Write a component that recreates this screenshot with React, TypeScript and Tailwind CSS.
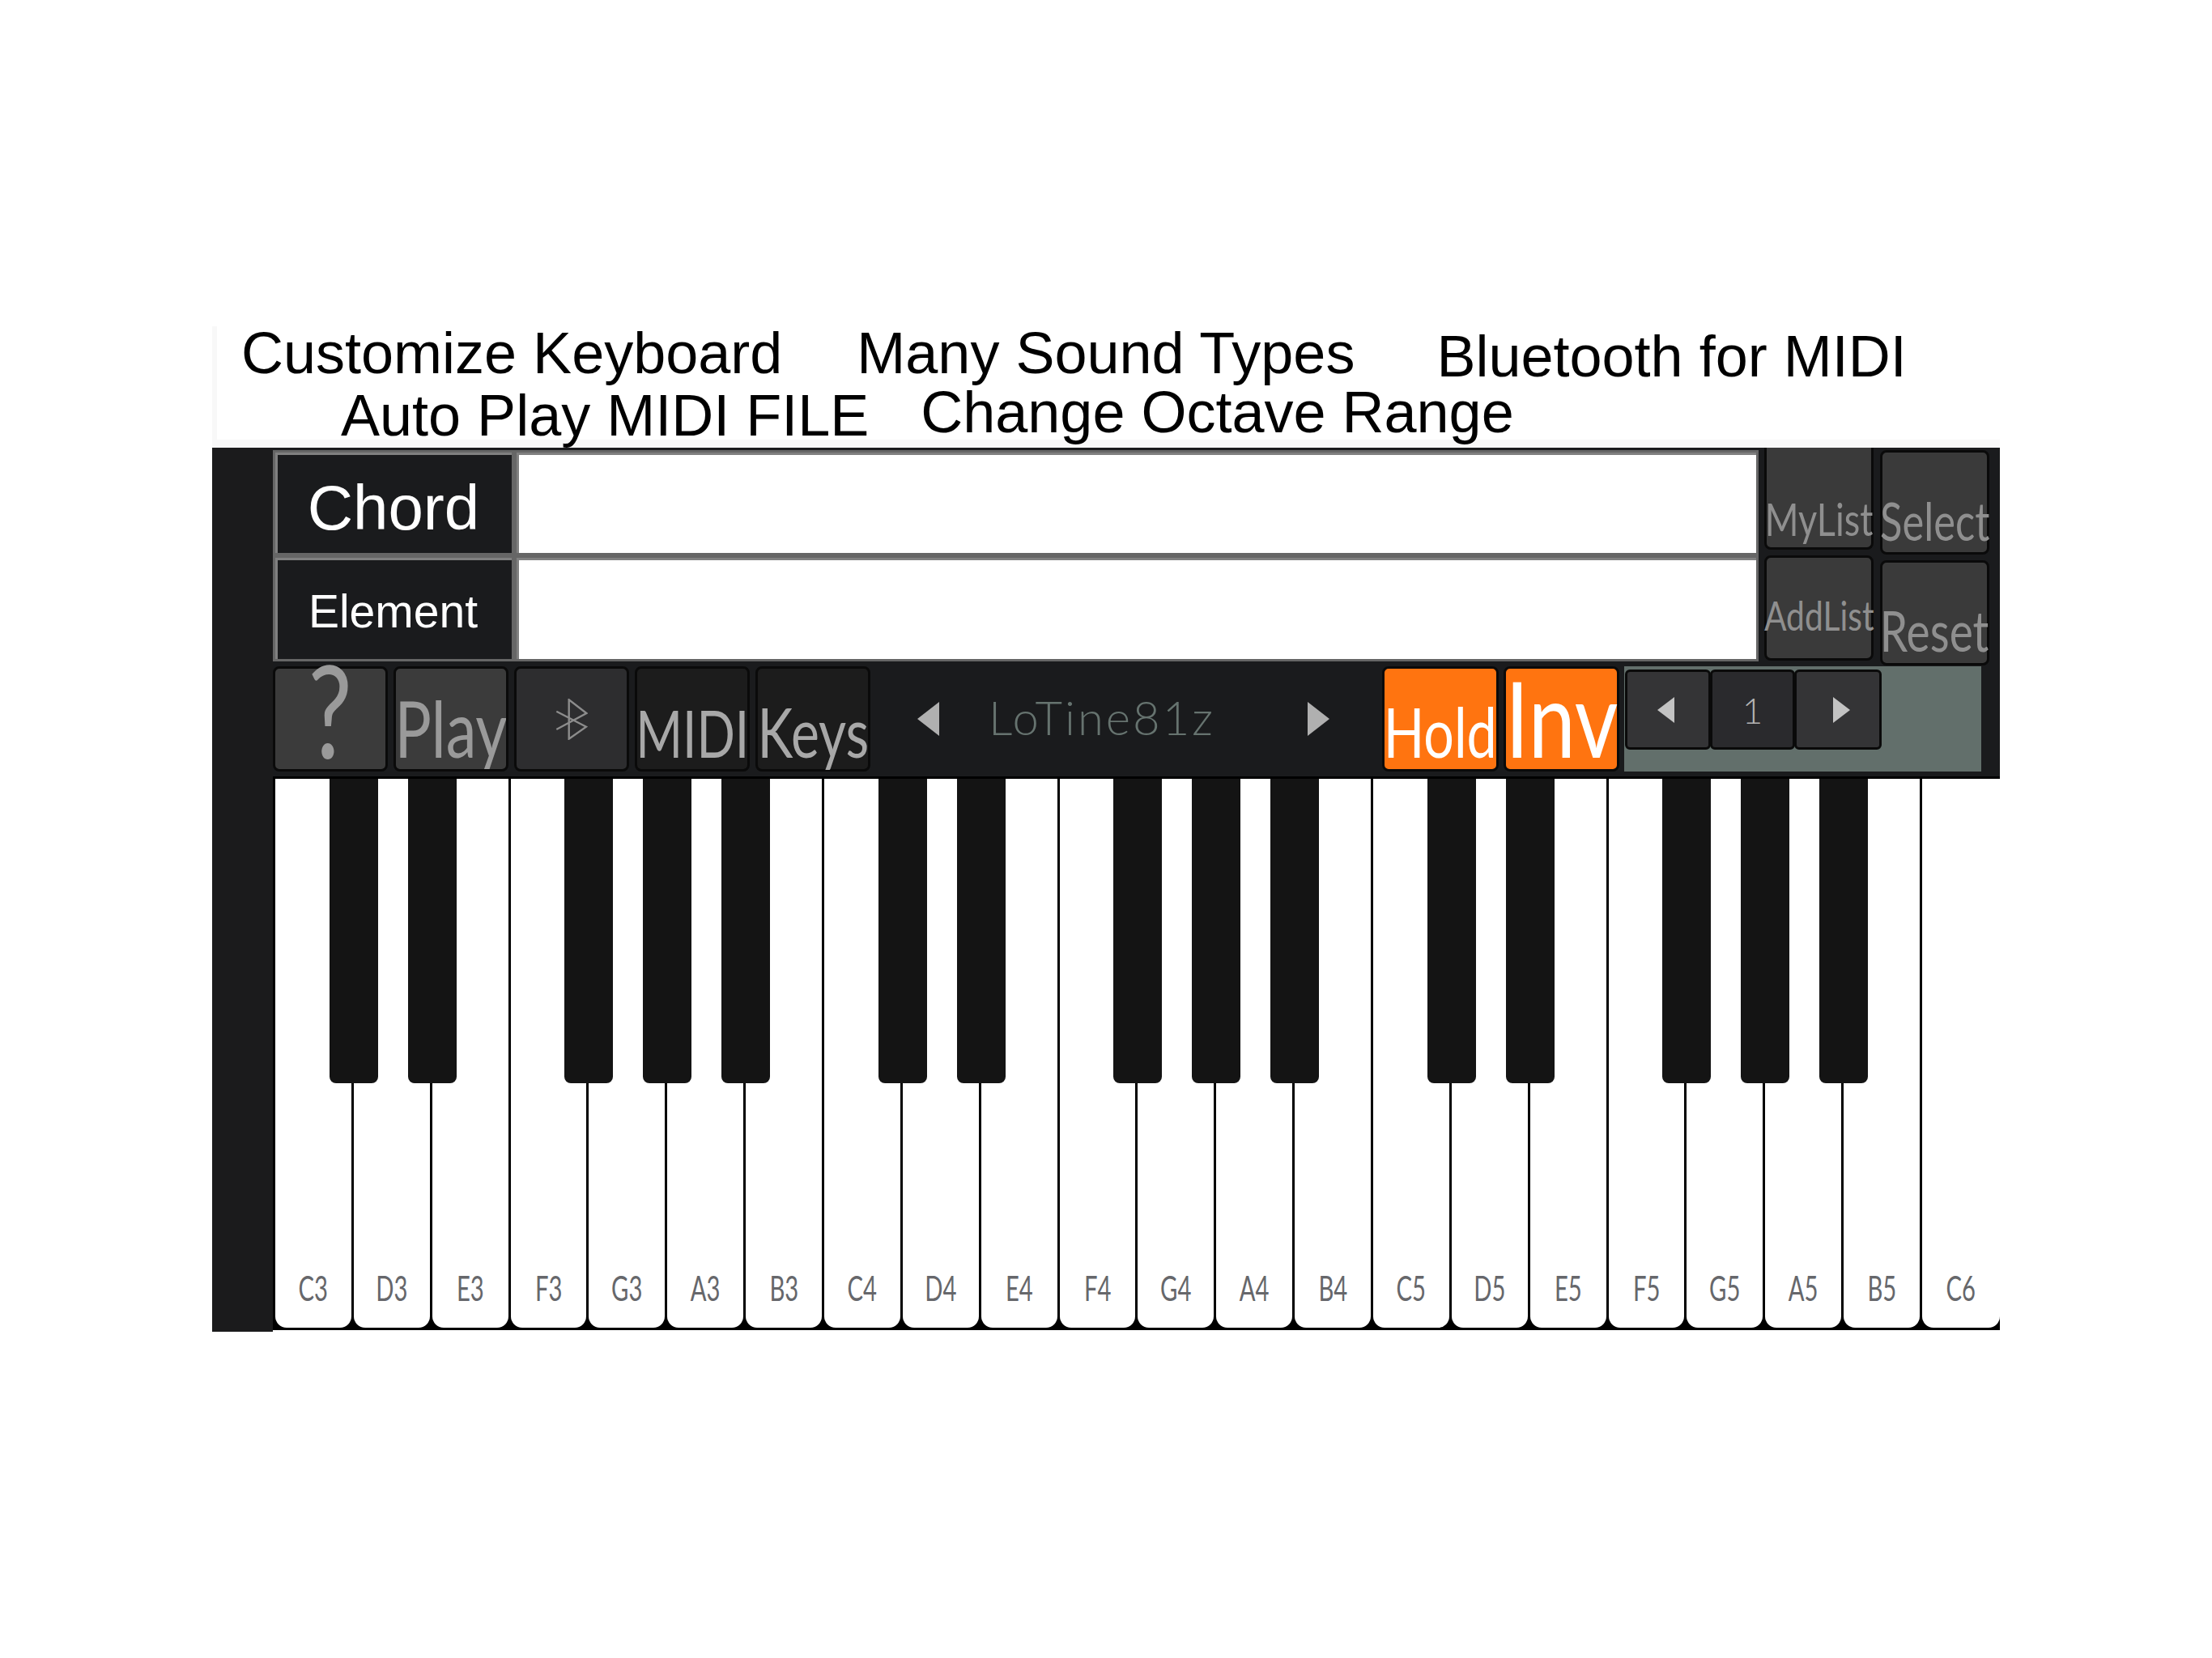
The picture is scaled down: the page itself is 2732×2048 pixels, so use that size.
import React from "react";

const whiteKeys = ["C3","D3","E3","F3","G3","A3","B3","C4","D4","E4","F4","G4","A4","B4","C5","D5","E5","F5","G5","A5","B5","C6"];
const hasBlack = (n: string) => !n.startsWith("E") && !n.startsWith("B") && n !== "C6";

function Btn({ box, label, text }: { box: string; label?: string; text?: string }) {
  return (
    <div className={"border-[3px] border-[#0a0a0a] rounded-[8px] flex items-end justify-center shrink-0 " + box}>
      {text ? <span className={"font-['Lato',sans-serif] whitespace-nowrap shrink-0 " + label}>{text}</span> : null}
    </div>
  );
}

function Tri({ dir, w, h, color }: { dir: "l" | "r"; w: number; h: number; color: string }) {
  return (
    <svg width={w} height={h} viewBox={`0 0 ${w} ${h}`} className="shrink-0 block">
      <polygon points={dir === "l" ? `0,${h / 2} ${w},0 ${w},${h}` : `0,0 ${w},${h / 2} 0,${h}`} fill={color} />
    </svg>
  );
}

export default function App() {
  return (
    <div className="w-[2732px] h-[2048px] bg-white pt-[403px] pl-[262px] overflow-hidden">
      <div className="w-[2208px]">
        <div className="bg-[#f8f8f8] pl-[6px] pb-[10px]">
          <div className="h-[140px] bg-white font-['Liberation_Sans',Arial,sans-serif] text-[72px] leading-[66px] text-black whitespace-nowrap">
            <div className="flex items-start pl-[30px]">
              <span>Customize Keyboard</span>
              <span className="ml-[92px]">Many Sound Types</span>
              <span className="ml-[101px] mt-[4px]">Bluetooth for MIDI</span>
            </div>
            <div className="flex items-start pl-[153px] mt-[3px]">
              <span className="mt-[4px]">Auto Play MIDI FILE</span>
              <span className="ml-[64px]">Change Octave Range</span>
            </div>
          </div>
        </div>

        <div className="flex items-start">
          <div className="w-[75px] h-[1092px] bg-[#1b1b1c] shrink-0" />
          <div className="w-[2133px] shrink-0">
            <div className="h-[406px] bg-[#1a1b1d] overflow-hidden">
              <div className="flex items-start h-[270px]">
                <div className="w-[1835px] h-[261px] mt-[3px] bg-[#666666] p-[3px] grid grid-cols-[292px_1fr] grid-rows-[124px_125px] gap-[6px] shrink-0 font-['Liberation_Sans',Arial,sans-serif] text-white">
                  <div className="border-l-[3px] border-t-[3px] border-[#808080] bg-[#1a1b1d] flex items-center justify-center pt-[8px] pr-[3px] text-[78px] leading-none">Chord</div>
                  <div className="border-l-[3px] border-t-[3px] border-[#808080] bg-white" />
                  <div className="border-l-[3px] border-t-[3px] border-[#808080] bg-[#1a1b1d] flex items-center justify-center pt-[4px] pr-[4px] text-[57px] leading-none">Element</div>
                  <div className="border-l-[3px] border-t-[3px] border-[#808080] bg-white" />
                </div>
                <div className="ml-[7px] w-[135px] shrink-0 flex flex-col gap-[7px]">
                  <Btn box="w-[135px] h-[126px] bg-[#3a3a3a] border-t-0 rounded-t-none pb-[7px]" label="text-[57px] leading-none scale-x-[0.79] text-[#8f8f8f]" text="MyList" />
                  <Btn box="w-[135px] h-[130px] bg-[#3a3a3a] pb-[28px]" label="text-[51px] leading-none scale-x-[0.8] text-[#8f8f8f]" text="AddList" />
                </div>
                <div className="ml-[8px] mt-[3px] w-[135px] shrink-0 flex flex-col gap-[7px]">
                  <Btn box="w-[135px] h-[129px] bg-[#3a3a3a] pb-[6px]" label="text-[65px] leading-none scale-x-[0.78] text-[#8f8f8f]" text="Select" />
                  <Btn box="w-[135px] h-[130px] bg-[#3a3a3a] pb-[6px]" label="text-[69px] leading-none scale-x-[0.8] text-[#8f8f8f]" text="Reset" />
                </div>
              </div>

              <div className="flex items-stretch h-[130px]">
                <div className="flex gap-[7px] shrink-0">
                  <Btn box="w-[142px] bg-[#3b3b3b] pb-[25px]" label="text-[160px] leading-[100px] scale-x-[0.76] text-[#9a9a9a]" text="?" />
                  <Btn box="w-[142px] bg-[#3b3b3b] pb-[3px] overflow-hidden" label="text-[97px] leading-none scale-x-[0.78] text-[#9a9a9a]" text="Play" />
                  <div className="w-[142px] border-[3px] border-[#0a0a0a] rounded-[8px] bg-[#2d2d2f] flex items-center justify-center shrink-0">
                    <svg width="40" height="51" viewBox="0 0 40 51" fill="none" stroke="#8c8c8c" strokeWidth="2.4">
                      <polyline points="1.3,15.7 38,34.7 16.7,49.7 16.7,1.3 38.3,18 1.3,38" />
                    </svg>
                  </div>
                  <Btn box="w-[142px] bg-[#1c1c1c] pb-[5px]" label="text-[82px] leading-none scale-x-[0.76] text-[#a8a8a8]" text="MIDI" />
                  <Btn box="w-[142px] bg-[#1c1c1c] pb-[4px]" label="text-[86px] leading-none scale-x-[0.77] text-[#a8a8a8]" text="Keys" />
                </div>
                <div className="flex items-center shrink-0 w-[632px] pl-[58px]">
                  <Tri dir="l" w={27} h={42} color="#b0b0b0" />
                  <span className="ml-[61px] w-[394px] font-['Lato',sans-serif] font-light text-[58px] tracking-[3px] leading-none text-[#66736f] whitespace-nowrap -mt-[4px]">LoTine81z</span>
                  <Tri dir="r" w={27} h={42} color="#b0b0b0" />
                </div>
                <Btn box="w-[144px] bg-[#ff7410] pb-[4px]" label="text-[85px] leading-none scale-x-[0.78] text-white" text="Hold" />
                <Btn box="ml-[6px] w-[143px] bg-[#ff7410] pb-[14px]" label="text-[130px] leading-[100px] scale-x-[0.8] text-white" text="Inv" />
                <div className="ml-[6px] w-[441px] bg-[#626f6b] pt-[4px] pl-[1px] shrink-0">
                  <div className="flex h-[99px] w-[318px]">
                    <div className="w-[106px] border-[3px] border-[#0a0a0a] rounded-[6px] bg-[#343436] flex items-center justify-center pr-[5px]"><Tri dir="l" w={21} h={32} color="#c3c3c3" /></div>
                    <div className="w-[105px] -ml-[1px] border-[3px] border-[#0a0a0a] rounded-[6px] bg-[#2a2a2d] flex items-center justify-center font-['Lato',sans-serif] font-light text-[44px] leading-none text-[#b4b4b4]">1</div>
                    <div className="w-[108px] -ml-[1px] border-[3px] border-[#0a0a0a] rounded-[6px] bg-[#343436] flex items-center justify-center pl-[9px]"><Tri dir="r" w={21} h={32} color="#c3c3c3" /></div>
                  </div>
                </div>
              </div>
            </div>

            <div className="h-[684px] bg-black pt-[3px] pb-[3px] flex">
              {whiteKeys.map((k, i) => (
                <div key={k} className={i === whiteKeys.length - 1 ? "relative flex-1 pl-[3px]" : "relative w-[96.86px] shrink-0 pl-[3px]"}>
                  <div className="h-full bg-white rounded-b-[14px] flex items-end justify-center pb-[28px]">
                    <span className="font-['Lato',sans-serif] text-[43px] leading-none scale-x-[0.68] text-[#66676b] whitespace-nowrap">{k}</span>
                  </div>
                  {hasBlack(k) ? <div className="absolute top-0 -right-[33px] z-10 w-[60px] h-[376px] bg-[#141414] rounded-b-[8px]" /> : null}
                </div>
              ))}
            </div>
          </div>
        </div>
      </div>
    </div>
  );
}
